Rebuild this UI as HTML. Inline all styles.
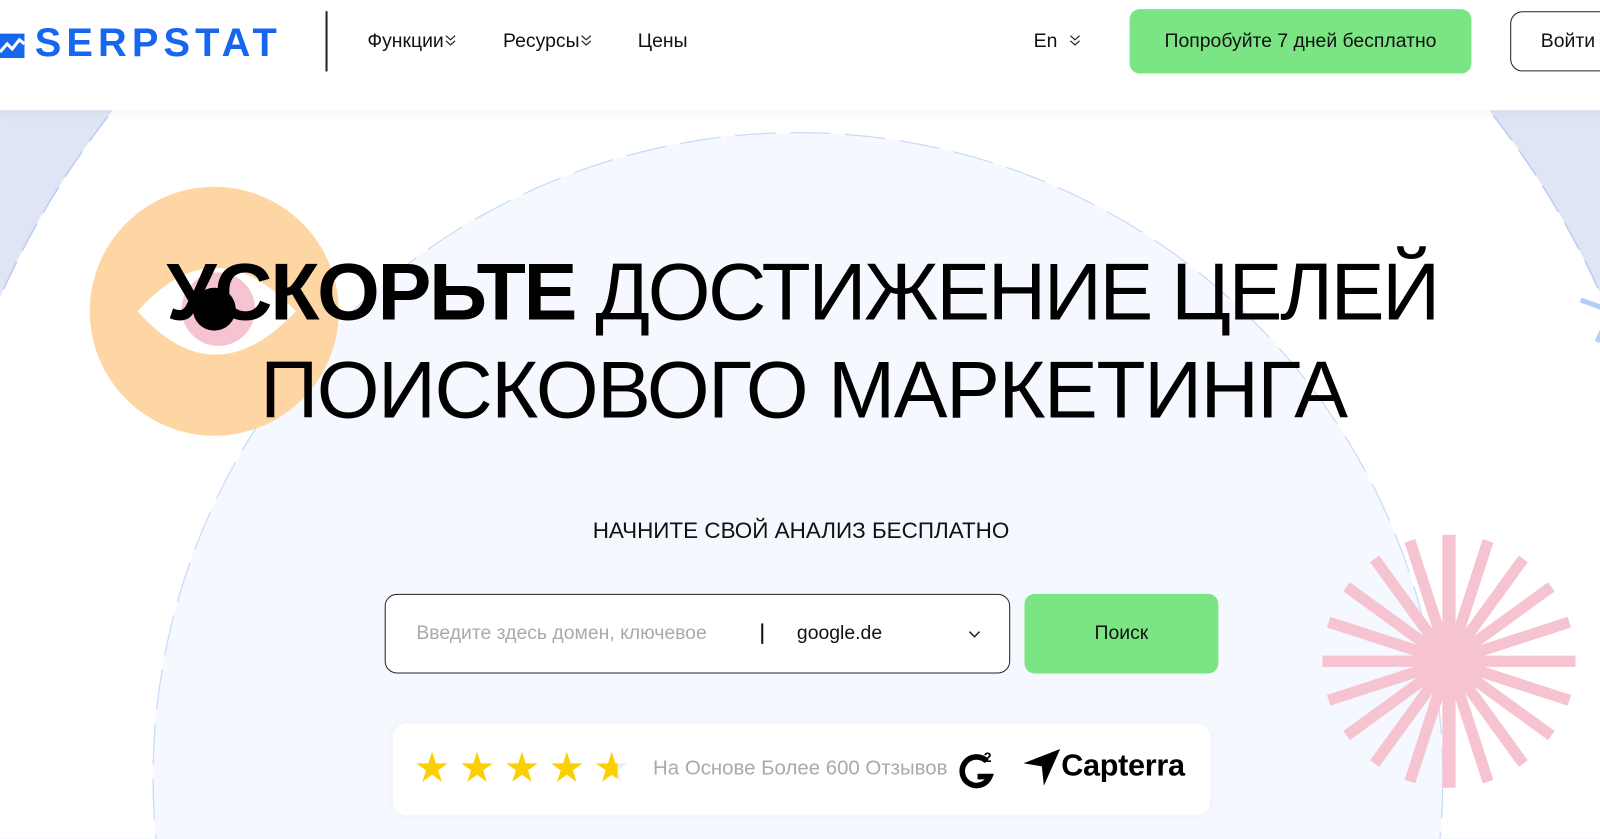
<!DOCTYPE html>
<html><head><meta charset="utf-8"><style>
*{margin:0;padding:0;box-sizing:border-box}
body{width:1600px;height:838px;overflow:hidden;position:relative;background:#dfe5f4;font-family:"Liberation Sans","Noto Sans CJK SC",sans-serif;color:#111}
#w{position:absolute;left:0;top:0;width:1568px;height:822px;transform:scale(1.0204);transform-origin:0 0;overflow:hidden}
.bg{position:absolute;left:0;top:0}
header{position:absolute;left:0;top:0;width:1600px;height:108px;background:#fff;box-shadow:0 4px 10px rgba(0,0,0,.04);z-index:5}
.logo{position:absolute;left:0;top:21px;font-weight:bold;font-size:39px;letter-spacing:5px;color:#1766f0}
.sep{position:absolute;left:319px;top:11px;width:2px;height:59px;background:#222}
.nav{position:absolute;top:30px;font-size:19px;color:#111}
.btn{position:absolute;left:1107px;top:9px;width:335px;height:63px;border-radius:10px;background:#7be584;font-size:19px;text-align:center;line-height:63px;color:#111}
.login{position:absolute;left:1480px;top:11px;width:140px;height:59px;border:1px solid #222;border-radius:12px;font-size:19px;line-height:57px;padding-left:29px}
h1{position:absolute;font-weight:normal;font-size:79px;line-height:79px;color:#000;white-space:nowrap}
.sub{position:absolute;top:507px;left:0;width:1570px;text-align:center;font-size:22px;color:#111}
.search{position:absolute;left:377px;top:582px;width:613px;height:78px;border:1px solid #222;border-radius:12px;background:#fff}
.go{position:absolute;left:1004px;top:582px;width:190px;height:78px;border-radius:10px;background:#7be584;font-size:19px;text-align:center;line-height:78px}
.rev{position:absolute;left:385px;top:709px;width:801px;height:90px;background:#fff;border-radius:14px;box-shadow:0 0 12px rgba(0,0,0,.03)}
</style></head><body><div id="w">
<svg class="bg" width="1568" height="822">
<rect width="1568" height="822" fill="#dfe5f4"/>
<circle cx="785" cy="640" r="859" fill="#fff"/>
<circle cx="785" cy="640" r="859" fill="none" stroke="#b9cdf7" stroke-width="1.5" stroke-dasharray="30 12"/>
<circle cx="782" cy="762" r="632" fill="#f5f8fe" stroke="#c9d9fa" stroke-width="1.2" stroke-dasharray="40 14"/>
<circle cx="210" cy="305" r="122" fill="#fed6a4"/>
<path d="M135 305 Q210 220 290 305 Q210 390 135 305Z" fill="#fff"/>
<circle cx="214" cy="303" r="36" fill="#f6c3d0"/>
<circle cx="210" cy="303" r="21" fill="#000"/>
<g stroke="#f6c3d0" stroke-width="11" transform="translate(1420,648)">
<line x1="0" y1="-124" x2="0" y2="124" stroke-width="13"/>
<line x1="0" y1="-124" x2="0" y2="124" transform="rotate(18)"/>
<line x1="0" y1="-124" x2="0" y2="124" transform="rotate(36)"/>
<line x1="0" y1="-124" x2="0" y2="124" transform="rotate(54)"/>
<line x1="0" y1="-124" x2="0" y2="124" transform="rotate(72)"/>
<line x1="0" y1="-124" x2="0" y2="124" transform="rotate(90)"/>
<line x1="0" y1="-124" x2="0" y2="124" transform="rotate(108)"/>
<line x1="0" y1="-124" x2="0" y2="124" transform="rotate(126)"/>
<line x1="0" y1="-124" x2="0" y2="124" transform="rotate(144)"/>
<line x1="0" y1="-124" x2="0" y2="124" transform="rotate(162)"/>
</g>
<g stroke="#b5cdf7" stroke-width="5"><line x1="1580" y1="305" x2="1549" y2="294"/><line x1="1580" y1="305" x2="1565" y2="335"/></g>
</svg>
<header>
<div class="logo"><svg width="26" height="26" viewBox="0 0 26 26" style="vertical-align:-2px;margin-right:8px"><path d="M0 2h24v24H0z" fill="#1766f0"/><path d="M0 20l7-8 5 5 7-9 5 4" stroke="#fff" stroke-width="3" fill="none"/></svg>SERPSTAT</div>
<div class="sep"></div>
<div class="nav" style="left:360px">Функции<svg width="11" height="12" viewBox="0 0 11 12" style="margin-left:1px"><path d="M1 1l4.5 4 4.5-4M1 6l4.5 4 4.5-4" stroke="#222" fill="none" stroke-width="1.2"/></svg></div>
<div class="nav" style="left:493px">Ресурсы<svg width="11" height="12" viewBox="0 0 11 12" style="margin-left:1px"><path d="M1 1l4.5 4 4.5-4M1 6l4.5 4 4.5-4" stroke="#222" fill="none" stroke-width="1.2"/></svg></div>
<div class="nav" style="left:625px">Цены</div>
<div class="nav" style="left:1013px">En <svg width="11" height="12" viewBox="0 0 11 12" style="margin-left:6px"><path d="M1 1l4.5 4 4.5-4M1 6l4.5 4 4.5-4" stroke="#222" fill="none" stroke-width="1.2"/></svg></div>
<div class="btn">Попробуйте 7 дней бесплатно</div>
<div class="login">Войти</div>
</header>
<h1 style="top:246px;left:163px;letter-spacing:-2.2px"><b>УСКОРЬТЕ</b> ДОСТИЖЕНИЕ ЦЕЛЕЙ</h1>
<h1 style="top:342px;left:255px;letter-spacing:-1.4px">ПОИСКОВОГО МАРКЕТИНГА</h1>
<div class="sub" style="top:507px">НАЧНИТЕ СВОЙ АНАЛИЗ БЕСПЛАТНО</div>
<div class="search">
<span style="position:absolute;left:30px;top:27px;font-size:19px;color:#aaa">Введите здесь домен, ключевое</span>
<span style="position:absolute;left:368px;top:28px;width:2px;height:20px;background:#111"></span>
<span style="position:absolute;left:403px;top:27px;font-size:19px;color:#111">google.de</span>
<svg style="position:absolute;left:571px;top:35px" width="12" height="8"><path d="M1 1l5 5 5-5" stroke="#222" fill="none" stroke-width="1.5"/></svg>
</div>
<div class="go">Поиск</div>
<div class="rev">
<div style="position:absolute;left:22px;top:26px;font-size:33px;line-height:36px;color:#fad000;letter-spacing:11px">★★★★<span style="background:linear-gradient(90deg,#fad000 50%,#eee 50%);-webkit-background-clip:text;color:transparent">★</span></div>
<div style="position:absolute;left:255px;top:33px;font-size:20px;color:#aaa">На Основе Более 600 Отзывов</div>
<svg style="position:absolute;left:555px;top:24px" width="40" height="42" viewBox="0 0 40 42"><path d="M27 13A14 14 0 1 0 30 28H18" stroke="#000" stroke-width="5.5" fill="none"/><text x="24" y="14" font-size="14" font-family="Liberation Sans" font-weight="bold">2</text></svg>
<svg style="position:absolute;left:618px;top:25px" width="40" height="38"><path d="M0 14L36 0 20 36 18 17Z" fill="#000"/></svg>
<div style="position:absolute;left:655px;top:25px;font-size:30px;font-weight:bold;color:#000;letter-spacing:-0.3px">Capterra</div>
</div>
</div></body></html>
